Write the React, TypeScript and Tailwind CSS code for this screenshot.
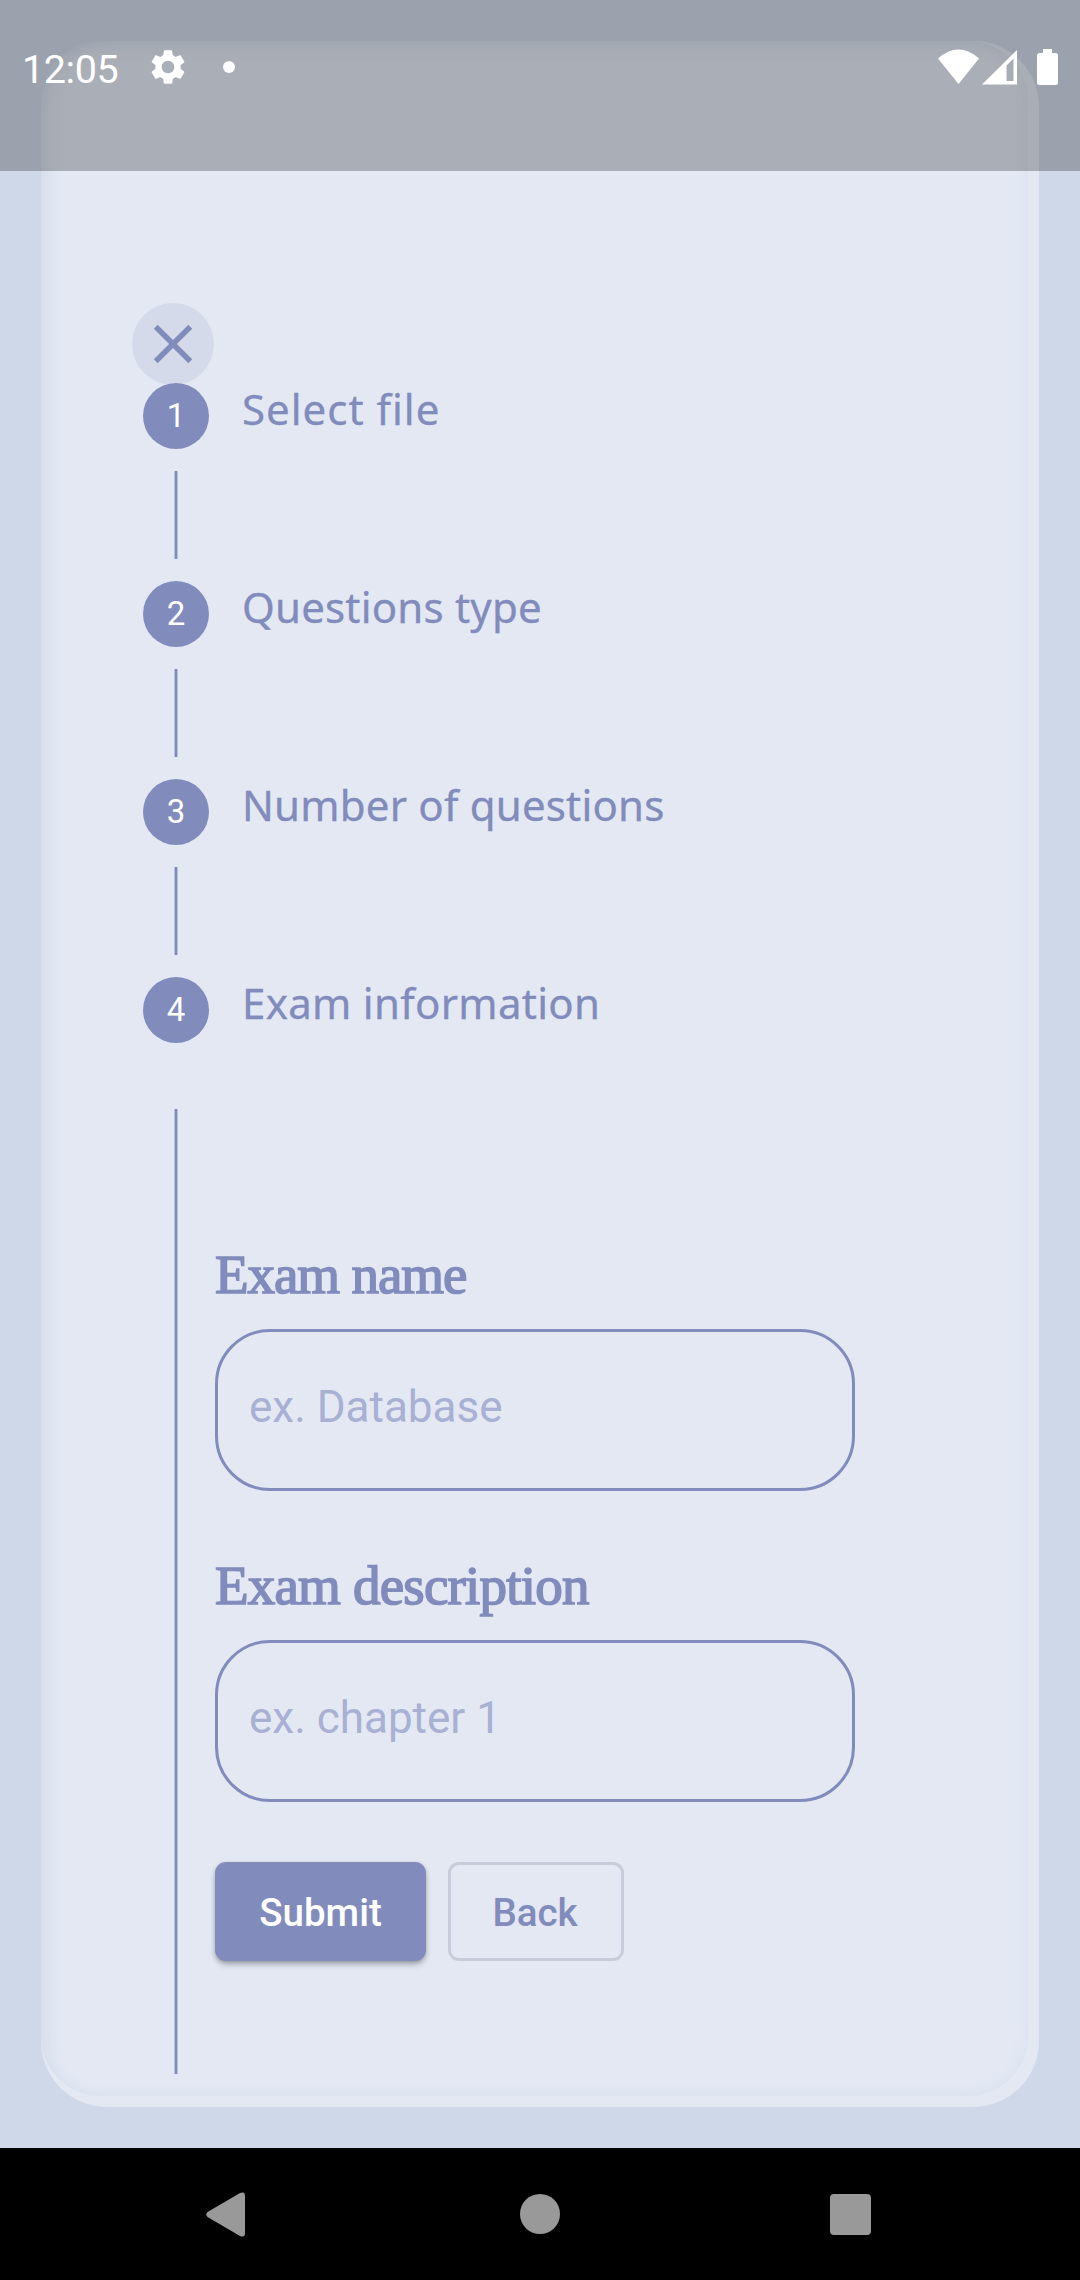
import { MdClose, MdSettings } from "react-icons/md";

const steps = [
  { title: "Select file", spacing: "tracking-[1px]" },
  { title: "Questions type", spacing: "tracking-[0.2px]" },
  { title: "Number of questions", spacing: "tracking-[0.2px]" },
  { title: "Exam information", spacing: "tracking-[0.300px]" },
];

function StatusBar() {
  return (
    <header className="absolute inset-x-0 top-0 z-10 h-[171px] bg-black/25 text-white">
      <div className="flex h-[134px] items-center pl-[22px] pr-[22px]">
        <span className="w-[125px] pt-[6px] text-[39.500px] leading-none tracking-[-0.4px]">12:05</span>
        <MdSettings className="size-[42px]" />
        <span className="ml-[34px] size-3 rounded-full bg-white" />
        <svg className="ml-auto h-[36px] w-[41px]" viewBox="0 0 41 36" fill="currentColor">
          <path d="M0 9.5Q20.5-8.5 41 9.5L20.5 35Z" />
        </svg>
        <svg className="ml-[3px] h-[36px] w-[35px]" viewBox="0 0 35 36">
          <path fillRule="evenodd" fill="currentColor" d="M35 1V35.500H0ZM31.500 9.500L24.500 16.500V32H31.500Z" />
        </svg>
        <svg className="ml-5 h-[36px] w-[21px]" viewBox="0 0 21 36" fill="currentColor">
          <path d="M6 0H15V4H18.500Q21 4 21 6.500V33.500Q21 36 18.500 36H2.500Q0 36 0 33.500V6.500Q0 4 2.500 4H6Z" />
        </svg>
      </div>
    </header>
  );
}

function Connector({ className }: { className: string }) {
  return <div className={`w-1 border-x border-[#b9c0dc] bg-[#818bbc] ${className}`} />;
}

function Field({ label, placeholder, labelClass }: { label: string; placeholder: string; labelClass: string }) {
  return (
    <label className="block">
      <span
        className={`block h-[60px] whitespace-nowrap font-['Liberation_Serif',serif] text-[55px] leading-[64px] [-webkit-text-stroke:1.6px_#818bbc] ${labelClass}`}
      >
        {label}
      </span>
      <input
        placeholder={placeholder}
        className="mt-[26px] block h-[162px] w-[640px] rounded-[55px] border-3 border-[#818bbc] bg-transparent pb-[6px] pl-[31px] text-[44px] placeholder:text-[#a8b0d3]"
      />
    </label>
  );
}

function NavigationBar() {
  return (
    <nav className="flex h-[132px] items-center justify-between bg-black pl-[206px] pr-[209px] text-[#999999]">
      <svg className="h-[45px] w-[39px]" viewBox="0 0 39 45" fill="currentColor">
        <path d="M1.500 20L34 1Q39-1 39 4V41Q39 46 34 44L1.500 25Q-1 22.500 1.500 20Z" />
      </svg>
      <span className="ml-[4px] size-10 rounded-full bg-current" />
      <span className="size-[41px] rounded-[4px] bg-current" />
    </nav>
  );
}

export default function App() {
  return (
    <div className="relative flex h-[2280px] w-[1080px] flex-col overflow-hidden bg-[#cfd8e9] font-[Roboto,sans-serif] text-[#818bbc]">
      <StatusBar />
      <main className="flex-1 p-[41px]">
        <section className="h-[2066px] w-[998px] rounded-[66px] bg-[#e3e8f3]">
          <div className="h-[2055px] w-[987px] rounded-[60px] pl-[91px] pt-[262px] shadow-[inset_8px_8px_16px_-3px_#d3dceb,inset_-3px_-3px_14px_-2px_#dce2ef]">
            <button className="flex size-[82px] items-center justify-center rounded-full bg-[#d5daea]">
              <MdClose className="size-[66px]" />
            </button>
            <div className="-mt-0.5 ml-[11px]">
              {steps.map(({ title, spacing }, i) => (
                <div key={title} className={i < 3 ? "h-[198px]" : "h-[66px]"}>
                  <div className="flex items-center">
                    <span className="flex size-[66px] items-center justify-center rounded-full bg-[#818bbc] text-[33px] text-white">
                      {i + 1}
                    </span>
                    <span
                      className={`ml-[33px] whitespace-nowrap pb-3.5 font-['Noto_Sans',sans-serif] text-[42px] leading-[50px] [-webkit-text-stroke:0.3px_#818bbc] ${spacing}`}
                    >
                      {title}
                    </span>
                  </div>
                  {i < 3 && <Connector className="ml-[31px] mt-[22px] h-[88px]" />}
                </div>
              ))}
              <div className="mt-[66px] flex pl-[31px]">
                <Connector className="h-[965px]" />
                <form className="pl-[37px] pt-[134px]">
                  <Field label="Exam name" placeholder="ex. Database" labelClass="tracking-[-1.1px]" />
                  <div className="mt-[63px]">
                    <Field label="Exam description" placeholder="ex. chapter 1" labelClass="tracking-[-0.8px]" />
                  </div>
                  <div className="mt-[60px] flex gap-[22px] text-[38.500px] font-medium">
                    <button
                      type="button"
                      className="h-[99px] w-[211px] rounded-[11px] bg-[#818bbc] pt-0.5 text-white shadow-[0_4px_6px_-1px_rgba(0,0,0,0.3),0_1px_4px_rgba(0,0,0,0.12)]"
                    >
                      Submit
                    </button>
                    <button type="button" className="h-[99px] w-[176px] rounded-[11px] border-3 border-[#c8ccda] pr-0.5 pt-0.5">
                      Back
                    </button>
                  </div>
                </form>
              </div>
            </div>
          </div>
        </section>
      </main>
      <NavigationBar />
    </div>
  );
}
